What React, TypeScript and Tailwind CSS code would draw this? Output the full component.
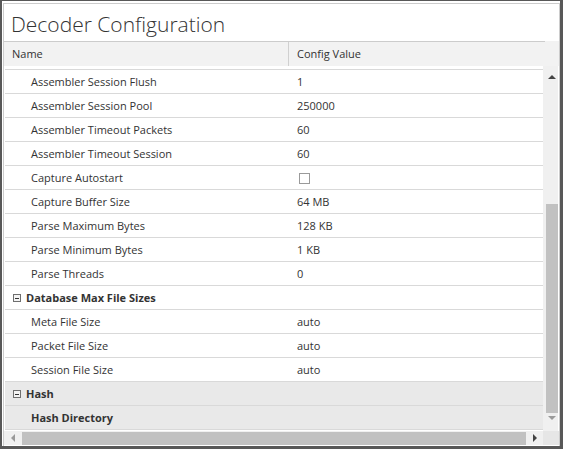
import React from "react";

type Row =
  | { kind: "item"; name: string; value?: string; checkbox?: boolean; shaded?: boolean; bold?: boolean }
  | { kind: "group"; name: string; shaded?: boolean };

const rows: Row[] = [
  { kind: "item", name: "Assembler Session Flush", value: "1" },
  { kind: "item", name: "Assembler Session Pool", value: "250000" },
  { kind: "item", name: "Assembler Timeout Packets", value: "60" },
  { kind: "item", name: "Assembler Timeout Session", value: "60" },
  { kind: "item", name: "Capture Autostart", checkbox: true },
  { kind: "item", name: "Capture Buffer Size", value: "64 MB" },
  { kind: "item", name: "Parse Maximum Bytes", value: "128 KB" },
  { kind: "item", name: "Parse Minimum Bytes", value: "1 KB" },
  { kind: "item", name: "Parse Threads", value: "0" },
  { kind: "group", name: "Database Max File Sizes" },
  { kind: "item", name: "Meta File Size", value: "auto" },
  { kind: "item", name: "Packet File Size", value: "auto" },
  { kind: "item", name: "Session File Size", value: "auto" },
  { kind: "group", name: "Hash", shaded: true },
  { kind: "item", name: "Hash Directory", shaded: true, bold: true },
];

function MinusBox() {
  return (
    <span className="w-[8px] h-[8px] border border-[#6f6f6f] bg-[#f4f4f4] flex items-center justify-center">
      <span className="w-[4px] h-px bg-[#333]" />
    </span>
  );
}

export default function App() {
  return (
    <div
      className="w-[563px] h-[449px] bg-[#585858] pt-px pl-[2px] pr-[3px] pb-[3px] text-[#333]"
      style={{ fontFamily: '"Open Sans", "Liberation Sans", sans-serif' }}
    >
      <div className="h-full bg-white pl-px pt-[2px]">
        <div className="h-full border-l border-t border-r border-[#cccccc] flex flex-col">
          {/* title */}
          <div className="h-[37px] pt-[3px] pl-[7px] text-[21px] font-light leading-[35px]">
            Decoder Configuration
          </div>

          {/* header */}
          <div className="h-[25px] flex bg-[#f2f2f2] text-[11px]">
            <div className="w-[541px] border-t border-[#cccccc] flex">
              <div className="w-[284px] pl-[8px] flex items-center">Name</div>
              <div className="w-px bg-[#d0d0d0]" />
              <div className="flex-1 pl-[8px] flex items-center">Config Value</div>
            </div>
            <div className="flex-1" />
          </div>

          {/* body */}
          <div className="h-[365px] flex">
            <div className="w-[539px] pt-[3px] pl-px text-[11px]">
              <div className="border-b border-[#d9d9d9]">
                {rows.map((r) => (
                  <div
                    key={r.name}
                    className={`h-[24px] pt-px border-t border-[#d9d9d9] flex items-center ${
                      r.shaded ? "bg-[#e9e9e9]" : "bg-white"
                    }`}
                  >
                    {r.kind === "group" ? (
                      <div className="w-[284px] pl-[8px] flex items-center gap-[5px] font-bold">
                        <MinusBox />
                        <span>{r.name}</span>
                      </div>
                    ) : (
                      <>
                        <div className={`w-[284px] pl-[26px] ${r.bold ? "font-bold" : ""}`}>{r.name}</div>
                        <div className="pl-[8px] flex items-center">
                          {r.checkbox ? (
                            <span className="ml-[2px] w-[11px] h-[11px] border border-[#9a9a9a] bg-white" />
                          ) : (
                            r.value
                          )}
                        </div>
                      </>
                    )}
                  </div>
                ))}
              </div>
            </div>

            {/* vertical scrollbar */}
            <div className="w-[15px] bg-[#f0f0f0] flex flex-col">
              <div className="h-[13px] flex items-end justify-center pl-[2px]">
                <span className="w-0 h-0 border-l-[4px] border-r-[4px] border-b-[4px] border-l-transparent border-r-transparent border-b-[#444]" />
              </div>
              <div className="h-[125px]" />
              <div className="ml-[3px] h-[209px] bg-[#c1c1c1]" />
              <div className="h-[10px] flex items-center justify-center pl-[2px]">
                <span className="w-0 h-0 border-l-[4px] border-r-[4px] border-t-[4px] border-l-transparent border-r-transparent border-t-[#9a9a9a]" />
              </div>
            </div>
          </div>

          {/* horizontal scrollbar */}
          <div className="h-[14px] flex">
            <div className="w-[539px] bg-[#f0f0f0] flex items-center">
              <div className="w-[18px] flex items-center justify-center">
                <span className="w-0 h-0 border-t-[4px] border-b-[4px] border-r-[4px] border-t-transparent border-b-transparent border-r-[#9a9a9a]" />
              </div>
              <div className="w-[504px] h-[13px] mt-px bg-[#c1c1c1]" />
              <div className="flex-1 flex items-center justify-center">
                <span className="w-0 h-0 border-t-[4px] border-b-[4px] border-l-[4px] border-t-transparent border-b-transparent border-l-[#444]" />
              </div>
            </div>
            <div className="flex-1 bg-[#e6e6e6]" />
          </div>
        </div>
      </div>
    </div>
  );
}
